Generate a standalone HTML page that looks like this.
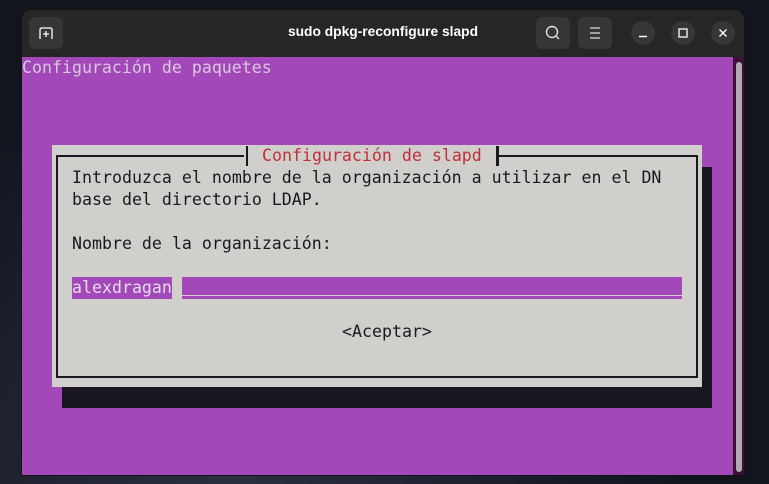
<!DOCTYPE html>
<html><head><meta charset="utf-8"><style>
*{margin:0;padding:0;box-sizing:border-box}
body{width:769px;height:484px;overflow:hidden;background:radial-gradient(ellipse at 30% 100%,#2a3040,#12141e 60%);position:relative;font-family:"DejaVu Sans Mono","Liberation Mono",monospace}
.win{position:absolute;left:21px;top:9px;width:724px;height:467px;background:#242424;border-radius:10px 10px 0 0;overflow:hidden;border:1px solid #111}
.hb{position:absolute;left:0;top:0;width:100%;height:47px;background:#262626}
.btn{position:absolute;top:7px;width:34px;height:32px;background:#363636;border-radius:6px}
.circ{position:absolute;top:11px;width:24px;height:24px;border-radius:50%;background:#363636}
.title{position:absolute;left:0;width:100%;top:14px;text-align:center;color:#fff;font:bold 13.8px "Liberation Sans",sans-serif}
.term{position:absolute;left:0;top:47px;width:711px;height:419px;background:#a348b9}
.sb{position:absolute;left:711px;top:47px;width:13px;height:420px;background:#3a1038}
.sb div{position:absolute;left:3px;top:5px;width:6px;height:410px;background:#b0aab0;border-radius:3px}
.t{position:absolute;font-size:16.6px;line-height:22px;white-space:pre;letter-spacing:0}
</style></head><body>
<div class="win">
 <div class="hb">
  <div class="btn" style="left:7px"><svg width="34" height="32"><path d="M11 22v-9q0-2 2-2h8q2 0 2 2v9" fill="none" stroke="#fff" stroke-width="1.3"/><path d="M17 14v6M14 17h6" stroke="#fff" stroke-width="1.3"/></svg></div>
  <div class="title">sudo dpkg-reconfigure slapd</div>
  <div class="btn" style="left:514px"><svg width="34" height="32"><circle cx="16" cy="15" r="5.5" fill="none" stroke="#ddd" stroke-width="1.4"/><path d="M20 19l3 3" stroke="#ddd" stroke-width="1.4"/></svg></div>
  <div class="btn" style="left:556px"><svg width="34" height="32"><path d="M12 11h10M12 16h10M12 21h10" stroke="#ddd" stroke-width="1.3"/></svg></div>
  <div class="circ" style="left:609px"><svg width="24" height="24"><path d="M8 15.5h8" stroke="#fff" stroke-width="1.4"/></svg></div>
  <div class="circ" style="left:649px"><svg width="24" height="24"><rect x="8" y="8" width="8" height="8" fill="none" stroke="#fff" stroke-width="1.3"/></svg></div>
  <div class="circ" style="left:689px"><svg width="24" height="24"><path d="M8.5 8.5l7 7M15.5 8.5l-7 7" stroke="#fff" stroke-width="1.4"/></svg></div>
 </div>
 <div class="term"></div>
 <div class="sb"><div></div></div>
</div>
<div class="t" style="left:22px;top:57px;color:#d8c8dc">Configuración de paquetes</div>
<div style="position:absolute;left:62px;top:167px;width:650px;height:241px;background:#19161f"></div>
<div style="position:absolute;left:52px;top:145px;width:650px;height:242px;background:#d0cfcb"></div>
<div style="position:absolute;left:56px;top:155px;width:642px;height:223px;border:2.5px solid #1b1822"></div>
<div style="position:absolute;left:244px;top:150px;width:6px;height:17px;background:#d0cfcb"></div>
<div style="position:absolute;left:250px;top:145px;width:246px;height:22px;background:#d0cfcb"></div>
<div style="position:absolute;left:245.5px;top:146px;width:2.5px;height:20px;background:#1b1822"></div>
<div style="position:absolute;left:496px;top:146px;width:2.5px;height:20px;background:#1b1822"></div>
<div class="t" style="left:262px;top:145px;color:#c0303a">Configuración de slapd</div>
<div class="t" style="left:72px;top:167px;color:#1b1822">Introduzca el nombre de la organización a utilizar en el DN
base del directorio LDAP.

Nombre de la organización:</div>
<div style="position:absolute;left:72px;top:277px;width:100px;height:22px;background:#a348b9"></div>
<div style="position:absolute;left:182px;top:277px;width:500px;height:22px;background:#a348b9"></div>
<div style="position:absolute;left:182px;top:295px;width:500px;height:1px;background:#d8c8dc"></div>
<div class="t" style="left:72px;top:277px;color:#e6dcea">alexdragan</div>
<div class="t" style="left:342px;top:321px;color:#1b1822">&lt;Aceptar&gt;</div>
</body></html>
